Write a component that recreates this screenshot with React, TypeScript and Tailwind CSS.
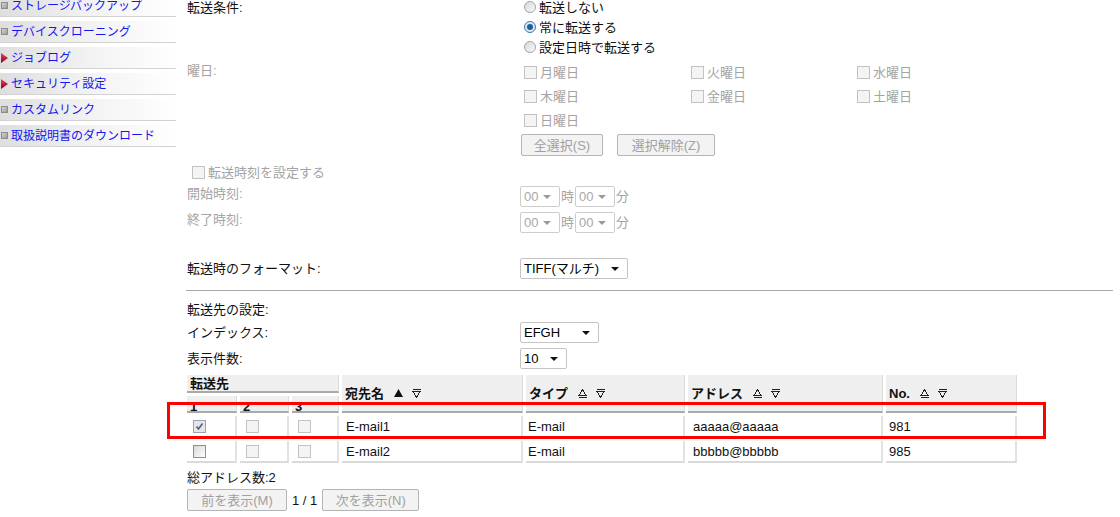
import React from 'react';

const sideItems: { label: string; mark: 'box' | 'arrow' }[] = [
  { label: 'ストレージバックアップ', mark: 'box' },
  { label: 'デバイスクローニング', mark: 'box' },
  { label: 'ジョブログ', mark: 'arrow' },
  { label: 'セキュリティ設定', mark: 'arrow' },
  { label: 'カスタムリンク', mark: 'box' },
  { label: '取扱説明書のダウンロード', mark: 'box' },
];

const Bullet: React.FC<{ mark: 'box' | 'arrow' }> = ({ mark }) =>
  mark === 'box' ? (
    <span className="w-[7px] h-[7px] border border-[#8c8c8c] bg-linear-to-br from-[#d4d4d4] to-[#9c9c9c] shrink-0" />
  ) : (
    <svg width="7" height="10" viewBox="0 0 7 10" className="shrink-0">
      <defs>
        <linearGradient id="rg" x1="0" y1="0" x2="0" y2="1">
          <stop offset="0" stopColor="#f0406a" />
          <stop offset="1" stopColor="#8a0018" />
        </linearGradient>
      </defs>
      <path d="M0 0 L7 5 L0 10 Z" fill="url(#rg)" />
    </svg>
  );

const Checkbox: React.FC<{ checked?: boolean; disabled?: boolean }> = ({ checked, disabled }) => (
  <span
    className={`w-[13px] h-[13px] shrink-0 border flex items-center justify-center ${
      disabled
        ? 'border-[#c2c2c2] bg-[#f4f4f4]'
        : checked
        ? 'border-[#9aa3b5] bg-[#e6e6e6]'
        : 'border-[#8e8e8e] bg-linear-to-br from-[#d8d8d8] to-white'
    }`}
  >
    {checked && (
      <svg width="9" height="9" viewBox="0 0 9 9">
        <path d="M1.5 4.5 L3.5 7 L7.5 1.5" fill="none" stroke="#4b5f97" strokeWidth="1.6" />
      </svg>
    )}
  </span>
);

const Radio: React.FC<{ checked?: boolean }> = ({ checked }) => (
  <span
    className={`w-[12px] h-[12px] rounded-full border shrink-0 flex items-center justify-center ${
      checked ? 'border-[#3d7bad] bg-[#dbe8f3]' : 'border-[#a4a4a4] bg-linear-to-br from-[#d6d6d6] to-[#fbfbfb]'
    }`}
  >
    {checked && <span className="w-[6px] h-[6px] rounded-full bg-[#1f5e9c]" />}
  </span>
);

const Select: React.FC<{ value: string; width: string; disabled?: boolean }> = ({ value, width, disabled }) => (
  <div
    className={`${width} h-[21px] border rounded-[2px] bg-white flex items-center justify-between pl-[3px] pr-[8px] ${
      disabled ? 'border-[#cdcdcd] text-[#a8a8a8]' : 'border-[#c4c4c4] text-black'
    }`}
  >
    <span>{value}</span>
    <svg width="8" height="4" viewBox="0 0 8 4">
      <path d="M0 0 H8 L4 4 Z" fill={disabled ? '#9a9a9a' : '#111'} />
    </svg>
  </div>
);

const Button: React.FC<{ label: string; width: string }> = ({ label, width }) => (
  <div
    className={`${width} h-[22px] border border-[#b4b4b4] rounded-[2px] bg-[#f3f3f3] text-[#a0a0a0] flex items-center justify-center`}
  >
    {label}
  </div>
);

const AscIcon = () => (
  <svg width="9" height="9" viewBox="0 0 9 9" shapeRendering="crispEdges">
    <path d="M4.5 0.5 L8 6.5 H1 Z" fill="none" stroke="#222" strokeWidth="1" />
    <path d="M0.5 8.5 H8.5" stroke="#222" strokeWidth="1" />
  </svg>
);

const DescIcon = () => (
  <svg width="9" height="9" viewBox="0 0 9 9" shapeRendering="crispEdges">
    <path d="M0.5 0.5 H8.5" stroke="#222" strokeWidth="1" />
    <path d="M1 2.5 H8 L4.5 8.5 Z" fill="none" stroke="#222" strokeWidth="1" />
  </svg>
);

const FilledAsc = () => (
  <svg width="9" height="8" viewBox="0 0 9 8">
    <path d="M4.5 0 L9 8 H0 Z" fill="#111" />
  </svg>
);

const headCell = 'bg-[#efefef] border-r border-r-[#dcdcdc] border-b-2 border-b-[#a9a9a9] font-bold pl-[3px]';
const bodyCell = 'bg-white border-r-2 border-r-[#e2e2e2] border-b-2 border-b-[#dadada] flex items-center';

const SortHead: React.FC<{ label: string; active?: boolean }> = ({ label, active }) => (
  <div className={`${headCell} row-span-2 flex items-center gap-[10px]`}>
    <span>{label}</span>
    <span className="flex items-center gap-[9px]">
      {active ? <FilledAsc /> : <AscIcon />}
      <DescIcon />
    </span>
  </div>
);

const rows = [
  { checks: [true, false, false], name: 'E-mail1', type: 'E-mail', addr: 'aaaaa@aaaaa', no: '981' },
  { checks: [false, false, false], name: 'E-mail2', type: 'E-mail', addr: 'bbbbb@bbbbb', no: '985' },
];

const weekdays = ['月曜日', '火曜日', '水曜日', '木曜日', '金曜日', '土曜日', '日曜日'];

export default function App() {
  return (
    <div className="relative w-[1120px] h-[517px] overflow-hidden bg-white flex font-['Liberation_Sans','Noto_Sans_CJK_JP',sans-serif] text-[13px] leading-none text-[#111]">
      {/* sidebar */}
      <aside className="w-[176px] shrink-0 -mt-[5px] text-[12px]">
        {sideItems.map((it) => (
          <div
            key={it.label}
            className="h-[22px] mb-[4px] border-b border-[#d2d2d2] bg-linear-to-r from-[#dedede] via-[#f2f2f2] to-white flex items-center gap-[3px] pl-[1px] text-[#1515f0]"
          >
            <Bullet mark={it.mark} />
            <span>{it.label}</span>
          </div>
        ))}
      </aside>

      {/* main form */}
      <main className="ml-[11px] flex-1 -mt-[3px] flex flex-col">
        <div className="grid grid-cols-[333px_1fr]">
          <div className="h-[20px] flex items-center">転送条件:</div>
          <div className="flex flex-col pl-[4px]">
            {['転送しない', '常に転送する', '設定日時で転送する'].map((t, i) => (
              <div key={t} className="h-[20px] flex items-center gap-[3px]">
                <Radio checked={i === 1} />
                <span>{t}</span>
              </div>
            ))}
          </div>
        </div>

        <div className="grid grid-cols-[333px_1fr] mt-[3px] text-[#a4a4a4]">
          <div className="h-[20px] flex items-center">曜日:</div>
          <div className="flex flex-col">
            <div className="grid grid-cols-[167px_166px_1fr] pl-[4px]">
              {weekdays.map((d) => (
                <div key={d} className="h-[24px] flex items-center gap-[3px]">
                  <Checkbox disabled />
                  <span>{d}</span>
                </div>
              ))}
            </div>
            <div className="flex gap-[14px] mt-[2px] pl-[1px]">
              <Button label="全選択(S)" width="w-[82px]" />
              <Button label="選択解除(Z)" width="w-[98px]" />
            </div>
          </div>
        </div>

        <div className="h-[20px] mt-[6px] ml-[5px] flex items-center gap-[3px] text-[#a4a4a4]">
          <Checkbox disabled />
          <span>転送時刻を設定する</span>
        </div>

        {['開始時刻:', '終了時刻:'].map((l, i) => (
          <div key={l} className={`grid grid-cols-[333px_1fr] text-[#a4a4a4] ${i === 0 ? 'mt-[4px]' : 'mt-[5px]'}`}>
            <div className="h-[21px] flex items-center -mt-[3px]">{l}</div>
            <div className="flex items-center">
              <Select value="00" width="w-[40px]" disabled />
              <span className="px-[1px]">時</span>
              <Select value="00" width="w-[40px]" disabled />
              <span className="px-[1px]">分</span>
            </div>
          </div>
        ))}

        <div className="grid grid-cols-[333px_1fr] mt-[25px]">
          <div className="h-[21px] flex items-center">転送時のフォーマット:</div>
          <div>
            <Select value="TIFF(マルチ)" width="w-[108px]" />
          </div>
        </div>

        <div className="mt-[11px] -ml-[1px] w-[927px] h-px bg-[#a9a9a9]" />

        <div className="h-[18px] mt-[9px] flex items-center">転送先の設定:</div>

        <div className="grid grid-cols-[333px_1fr] mt-[4px]">
          <div className="h-[21px] flex items-center">インデックス:</div>
          <div>
            <Select value="EFGH" width="w-[79px]" />
          </div>
        </div>

        <div className="grid grid-cols-[333px_1fr] mt-[5px]">
          <div className="h-[21px] flex items-center">表示件数:</div>
          <div>
            <Select value="10" width="w-[47px]" />
          </div>
        </div>

        {/* destination table */}
        <div className="mt-[6px] grid grid-cols-[50px_49px_47px_181px_159px_195px_131px] grid-rows-[18px_17px_22px_22px] gap-x-[3px] gap-y-[3px]">
          <div className={`${headCell} col-span-3 flex items-center`}>転送先</div>
          <SortHead label="宛先名" active />
          <SortHead label="タイプ" />
          <SortHead label="アドレス" />
          <SortHead label="No." />
          {['1', '2', '3'].map((n) => (
            <div key={n} className={`${headCell} pt-[4px]`}>
              {n}
            </div>
          ))}
          {rows.map((r) => (
            <React.Fragment key={r.name}>
              {r.checks.map((c, i) => (
                <div key={i} className={`${bodyCell} pl-[6px]`}>
                  <Checkbox checked={c} disabled={i > 0} />
                </div>
              ))}
              <div className={`${bodyCell} pl-[4px]`}>{r.name}</div>
              <div className={`${bodyCell} pl-[2px]`}>{r.type}</div>
              <div className={`${bodyCell} pl-[5px]`}>{r.addr}</div>
              <div className={`${bodyCell} pl-[3px]`}>{r.no}</div>
            </React.Fragment>
          ))}
        </div>

        <div className="h-[16px] mt-[6px] flex items-center">総アドレス数:2</div>

        <div className="mt-[4px] flex items-center">
          <Button label="前を表示(M)" width="w-[100px]" />
          <span className="mx-[5px]">1 / 1</span>
          <Button label="次を表示(N)" width="w-[97px]" />
        </div>
      </main>

      {/* highlight annotation */}
      <div className="absolute left-[167px] top-[402px] w-[879px] h-[37px] border-[3px] border-[#ff0000] pointer-events-none" />
    </div>
  );
}
